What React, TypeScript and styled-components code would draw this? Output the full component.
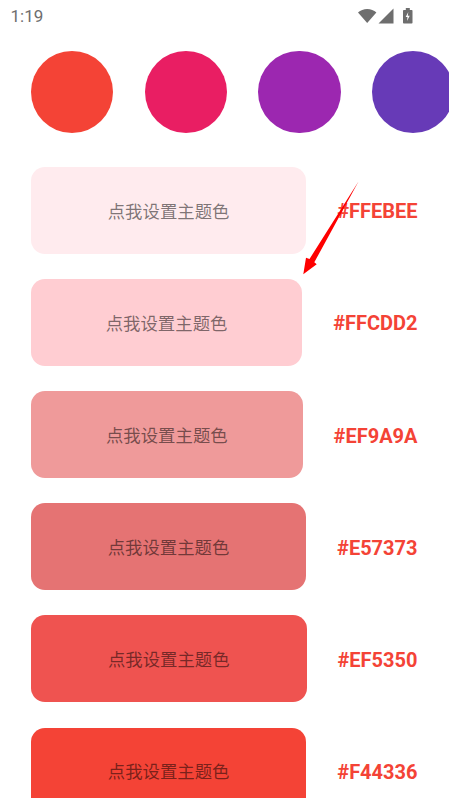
import React from "react";
import styled, { createGlobalStyle } from "styled-components";

const GlobalStyle = createGlobalStyle`
  html, body {
    margin: 0;
    padding: 0;
    background: #fff;
    font-family: Roboto, "Noto Sans CJK SC", sans-serif;
  }
`;

const Screen = styled.div`
  position: relative;
  width: 449px;
  height: 798px;
  overflow: hidden;
  background: #fff;
`;

const StatusBar = styled.div`
  height: 31px;
  display: flex;
  align-items: center;
  justify-content: space-between;
  padding: 0 36px 0 10.5px;
  color: #6e6e6e;
  font-size: 17px;
`;

const StatusIcons = styled.div`
  display: flex;
  align-items: center;
`;

const Swatches = styled.div`
  display: flex;
  gap: 31.4px;
  padding: 20px 0 0 31px;
`;

const Swatch = styled.div<{ $color: string }>`
  flex: none;
  width: 82.3px;
  height: 82.3px;
  border-radius: 50%;
  background: ${(p) => p.$color};
`;

const Shades = styled.div`
  display: flex;
  flex-direction: column;
  gap: 25.11px;
  padding: 33.75px 31.5px 0 31px;
`;

const ShadeRow = styled.div`
  display: flex;
  align-items: center;
  gap: 31px;
`;

const ShadeButton = styled.div<{ $color: string }>`
  flex: 1;
  height: 87px;
  box-sizing: border-box;
  padding-bottom: 1px;
  display: flex;
  align-items: center;
  justify-content: center;
  border-radius: 14px;
  background: ${(p) => p.$color};
  color: rgba(0, 0, 0, 0.52);
  font-family: "Noto Sans CJK SC", sans-serif;
  font-size: 17.4px;
`;

const HexLabel = styled.div`
  flex: none;
  padding-top: 1.6px;
  color: #f44336;
  font-size: 20px;
  font-weight: 700;
`;

const ArrowOverlay = styled.svg`
  position: absolute;
  left: 0;
  top: 0;
  pointer-events: none;
`;

const swatches = ["#F44336", "#E91E63", "#9C27B0", "#673AB7"];
const shades = ["#FFEBEE", "#FFCDD2", "#EF9A9A", "#E57373", "#EF5350", "#F44336"];

export default function App() {
  return (
    <Screen>
      <GlobalStyle />
      <StatusBar>
        <span>1:19</span>
        <StatusIcons>
          <svg width="55" height="18" viewBox="0 0 55 18" fill="#6e6e6e">
            <path d="M0 5.5C2.5 3.2 5.6 2 9.2 2s6.7 1.2 9.2 3.5L9.2 16z" />
            <path d="M35.5 1.500V16.500H20.500z" />
            <rect x="45" y="3" width="9.500" height="13.500" rx="0.800" />
            <rect x="47.800" y="1" width="4" height="2.500" />
            <path d="M50.300 5l-2.600 5h1.800l-.5 4 2.700-5.200h-1.900z" fill="#fff" />
          </svg>
        </StatusIcons>
      </StatusBar>
      <Swatches>
        {swatches.map((color) => (
          <Swatch key={color} $color={color} />
        ))}
      </Swatches>
      <Shades>
        {shades.map((color) => (
          <ShadeRow key={color}>
            <ShadeButton $color={color}>点我设置主题色</ShadeButton>
            <HexLabel>{color}</HexLabel>
          </ShadeRow>
        ))}
      </Shades>
      <ArrowOverlay width="449" height="798" viewBox="0 0 449 798">
        <polygon points="358.500,181.500 314.300,262.300 316.700,264.300 303.300,274.300 306,257.700 309.500,259" fill="#fe0000" />
      </ArrowOverlay>
    </Screen>
  );
}
